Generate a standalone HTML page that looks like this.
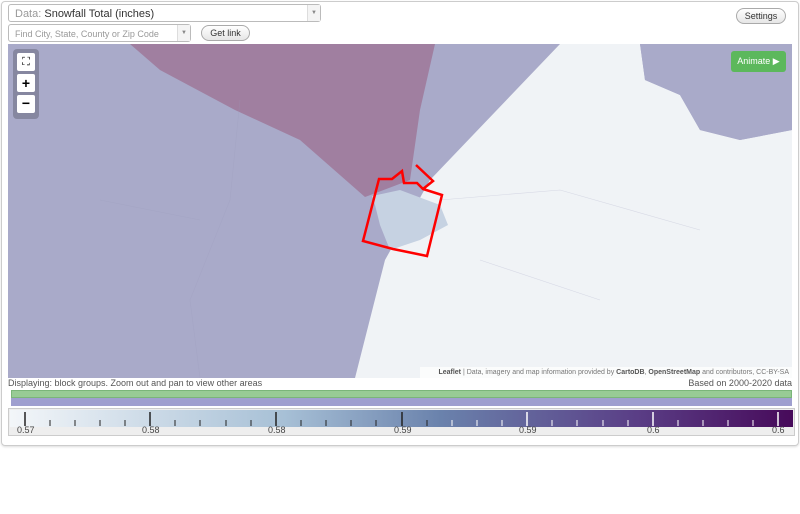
<!DOCTYPE html>
<html><head><style>
body{margin:0;width:800px;height:514px;background:#fff;font-family:"Liberation Sans",sans-serif;position:relative;overflow:hidden}
.frame{position:absolute;left:1px;top:1px;width:796px;height:443px;border:1px solid #ccc;border-radius:4px;box-shadow:0 1px 2px #ddd}
.sel{position:absolute;border:1px solid #bbb;border-radius:3px;background:#fff;font-size:11px;color:#999;box-sizing:border-box}
.arrow{position:absolute;right:0;top:0;bottom:0;width:12px;border-left:1px solid #ddd;background:#f4f4f4;font-size:6px;color:#888;text-align:center}
.btn{position:absolute;border:1px solid #aaa;border-radius:10px;background:linear-gradient(#fff,#e6e6e6);font-size:9px;color:#333;text-align:center;box-sizing:border-box}
.lbl{position:absolute;top:425px;font-size:9px;color:#444}
</style></head><body>
<div class="frame"></div>
<div class="sel" style="left:8px;top:4px;width:313px;height:18px;padding:3px 0 0 6px">Data: <span style="color:#333">Snowfall Total (inches)</span><div class="arrow" style="line-height:17px">▼</div></div>
<div class="sel" style="left:8px;top:24px;width:183px;height:18px;padding:4px 0 0 6px;font-size:9px">Find City, State, County or Zip Code<div class="arrow" style="line-height:17px">▼</div></div>
<div class="btn" style="left:201px;top:25px;width:49px;height:16px;line-height:14px">Get link</div>
<div class="btn" style="left:736px;top:8px;width:50px;height:16px;line-height:14px">Settings</div>
<svg style="position:absolute;left:8px;top:44px" width="784" height="334" viewBox="8 44 784 334">
<rect x="8" y="44" width="784" height="334" fill="#a9aac9"/>
<polygon points="130,44 435,44 420,110 410,180 365,197 300,140 235,110 160,70" fill="#a07fa0"/>
<polygon points="560,44 640,44 645,80 680,95 700,130 740,140 792,130 792,378 355,378 385,260 430,180" fill="#f0f3f6"/>
<polygon points="640,44 792,44 792,130 740,140 700,130 680,95 645,80" fill="#a9aac9"/>
<polygon points="372,196 400,190 440,205 448,225 420,240 390,250 380,225 375,205" fill="#c6d2e2"/>
<path d="M240 100 L230 200 L190 300 L200 378 M100 200 L200 220 M440 200 L560 190 L700 230 M480 260 L600 300" stroke="#9a9cbc" stroke-width="0.6" fill="none" opacity="0.3"/>
<polygon points="379,179 392,179 402,171 404,183 417,183 421,187 423,189 442,195 427,256 393,249 363,241" fill="none" stroke="#f00" stroke-width="2.5"/>
<polyline points="423,189 433,181 416,165" fill="none" stroke="#f00" stroke-width="2.5"/>
</svg>
<div style="position:absolute;left:13px;top:49px;width:26px;height:70px;background:rgba(100,100,120,.5);border-radius:4px"></div>
<div style="position:absolute;left:17px;top:53px;width:18px;height:18px;background:#fff;border-radius:2px;font-size:11px;text-align:center;line-height:18px">⛶</div>
<div style="position:absolute;left:17px;top:74px;width:18px;height:18px;background:#fff;border-radius:2px;font-size:14px;font-weight:bold;text-align:center;line-height:18px">+</div>
<div style="position:absolute;left:17px;top:95px;width:18px;height:18px;background:#fff;border-radius:2px;font-size:14px;font-weight:bold;text-align:center;line-height:17px">−</div>
<div style="position:absolute;left:731px;top:51px;width:55px;height:21px;background:#5cb85c;border-radius:3px;color:#fff;font-size:9px;text-align:center;line-height:21px">Animate ▶</div>
<div style="position:absolute;left:420px;top:367px;width:372px;height:11px;background:rgba(255,255,255,.7);font-size:7px;color:#777;text-align:right;line-height:11px;padding-right:3px;box-sizing:border-box"><b style="color:#555">Leaflet</b> | Data, imagery and map information provided by <b style="color:#555">CartoDB</b>, <b style="color:#555">OpenStreetMap</b> and contributors, CC-BY-SA</div>
<div style="position:absolute;left:8px;top:378px;font-size:9px;color:#555">Displaying: block groups. Zoom out and pan to view other areas</div>
<div style="position:absolute;right:8px;top:378px;font-size:9px;color:#555">Based on 2000-2020 data</div>
<div style="position:absolute;left:11px;top:390px;width:781px;height:8px;background:#98cb95;border:1px solid #7bb57a;box-sizing:border-box"></div>
<div style="position:absolute;left:11px;top:398px;width:781px;height:8px;background:#9f9fcf"></div>
<div style="position:absolute;left:8px;top:408px;width:787px;height:28px;border:1px solid #ccc;background:#eee;box-sizing:border-box"></div>
<div style="position:absolute;left:10px;top:410px;width:783px;height:17px;background:linear-gradient(90deg,#f3f6f9,#a7c0d6 35%,#6a82ac 55%,#5a3e86 80%,#470a5a)"></div>
<svg style="position:absolute;left:0;top:410px" width="800" height="17">
<g stroke="#222" stroke-width="1">
<line x1="25" y1="2" x2="25" y2="16" stroke-width="1.5"/><line x1="150" y1="2" x2="150" y2="16" stroke-width="1.5"/><line x1="276" y1="2" x2="276" y2="16" stroke-width="1.5"/><line x1="402" y1="2" x2="402" y2="16" stroke-width="1.5"/>
<line x1="50" y1="10" x2="50" y2="16"/><line x1="75" y1="10" x2="75" y2="16"/><line x1="100" y1="10" x2="100" y2="16"/><line x1="125" y1="10" x2="125" y2="16"/>
<line x1="175" y1="10" x2="175" y2="16"/><line x1="200" y1="10" x2="200" y2="16"/><line x1="226" y1="10" x2="226" y2="16"/><line x1="251" y1="10" x2="251" y2="16"/>
<line x1="301" y1="10" x2="301" y2="16"/><line x1="326" y1="10" x2="326" y2="16"/><line x1="351" y1="10" x2="351" y2="16"/><line x1="376" y1="10" x2="376" y2="16"/>
<line x1="427" y1="10" x2="427" y2="16"/></g>
<g stroke="#fff" stroke-width="1">
<line x1="527" y1="2" x2="527" y2="16" stroke-width="1.5"/><line x1="653" y1="2" x2="653" y2="16" stroke-width="1.5"/><line x1="778" y1="2" x2="778" y2="16" stroke-width="1.5"/>
<line x1="452" y1="10" x2="452" y2="16"/><line x1="477" y1="10" x2="477" y2="16"/><line x1="502" y1="10" x2="502" y2="16"/>
<line x1="552" y1="10" x2="552" y2="16"/><line x1="577" y1="10" x2="577" y2="16"/><line x1="603" y1="10" x2="603" y2="16"/><line x1="628" y1="10" x2="628" y2="16"/>
<line x1="678" y1="10" x2="678" y2="16"/><line x1="703" y1="10" x2="703" y2="16"/><line x1="728" y1="10" x2="728" y2="16"/><line x1="753" y1="10" x2="753" y2="16"/></g>
</svg>
<div class="lbl" style="left:17px">0.57</div>
<div class="lbl" style="left:142px">0.58</div>
<div class="lbl" style="left:268px">0.58</div>
<div class="lbl" style="left:394px">0.59</div>
<div class="lbl" style="left:519px">0.59</div>
<div class="lbl" style="left:647px">0.6</div>
<div class="lbl" style="left:772px">0.6</div>
</body></html>
